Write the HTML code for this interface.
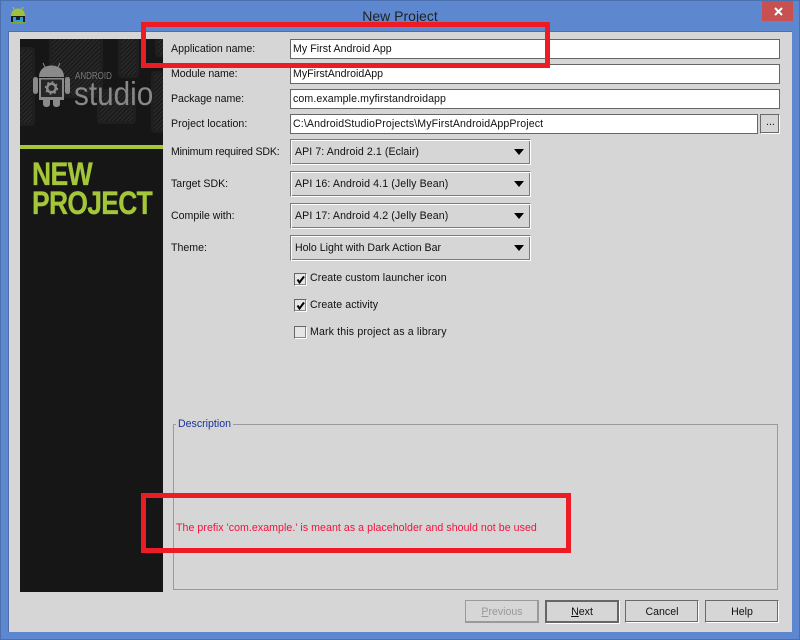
<!DOCTYPE html>
<html><head><meta charset="utf-8">
<style>
html,body{margin:0;padding:0;width:800px;height:640px;overflow:hidden;background:#5d88d0}
*{box-sizing:border-box}
.a{position:absolute}
.t{position:absolute;white-space:nowrap;font:10.6px/14px "Liberation Sans",sans-serif;color:#111}
.f{position:absolute;background:#fff;border:1px solid #666;height:20px}
.c{position:absolute;left:290px;width:241px;height:26px;background:#d6d6d6;border:1px solid;border-color:#7a7a7a #fff #fff #7a7a7a;box-shadow:inset 1px 1px 0 #fff,inset -1px -1px 0 #7a7a7a}
.c i{position:absolute;left:223px;top:9px;width:0;height:0;border:5.5px solid transparent;border-top:6px solid #000;border-bottom:0}
.k{position:absolute;left:294px;width:13px;height:13px;background:#e6e6e6;border:1px solid;border-color:#666 #fff #fff #666;box-shadow:inset -1px -1px 0 #888}
.b{position:absolute;top:600px;width:74px;height:23px;background:#d6d6d6;border:1px solid;border-color:#6a6a6a #fff #fff #6a6a6a;box-shadow:inset -1px -1px 0 #6a6a6a;text-align:center;font:10.6px/22px "Liberation Sans",sans-serif;color:#111}
.r{position:absolute;border:5px solid #ed1c24}
.h{position:absolute;border-radius:4px;border:3px solid #1f1f1f;background:repeating-linear-gradient(135deg,#1a1a1a 0,#1a1a1a 1.5px,#2a2a2a 1.5px,#2a2a2a 3px)}
</style></head>
<body>
<div class="a" style="left:0;top:0;width:800px;height:640px;background:#5d88d0;border:1px solid #4a70b0"></div>
<svg class="a" style="left:10px;top:6px" width="17" height="18" viewBox="0 0 17 18">
<path d="M4 3 3 1M12 3 13 1" stroke="#a8c84c" stroke-width="1"/>
<path d="M1 10C1 5 4 2.500 8 2.500S15 5 15 10Z" fill="#a0c040"/>
<rect x="1" y="10" width="14" height="7" fill="#1a1a1a"/>
<rect x="3" y="11" width="10" height="5" fill="#2aa0dc"/>
<rect x="6" y="11" width="4" height="3" fill="#123"/>
<rect x="1" y="16" width="14" height="1.500" fill="#86a838"/>
</svg>
<div class="t" style="left:300px;top:8px;width:200px;text-align:center;font-size:14px;line-height:16px;color:#222">New Project</div>
<div class="a" style="left:762px;top:1px;width:31px;height:20px;background:#c75050"></div>
<svg class="a" style="left:774px;top:7px" width="9" height="9" viewBox="0 0 9 9"><path d="M1 1 8 8M8 1 1 8" stroke="#fff" stroke-width="2"/></svg>

<div class="a" style="left:8px;top:31px;width:784px;height:601px;background:#d6d6d6;border-top:1px solid #4a70b0;border-left:1px solid #4a70b0"></div>

<div class="a" style="left:20px;top:39px;width:143px;height:553px;background:#161616;overflow:hidden">
  <div class="h" style="left:-6px;top:8px;width:21px;height:79px"></div>
  <div class="h" style="left:29px;top:-6px;width:54px;height:65px"></div>
  <div class="h" style="left:98px;top:-6px;width:21px;height:45px"></div>
  <div class="h" style="left:77px;top:50px;width:39px;height:35px"></div>
  <div class="h" style="left:131px;top:32px;width:22px;height:62px"></div>
  <div class="h" style="left:135px;top:-6px;width:20px;height:24px"></div>
  <svg class="a" style="left:13px;top:23px" width="38" height="46" viewBox="0 0 38 46">
    <path d="M12 5 10 1M25 5 27 1" stroke="#8a8a8a" stroke-width="1"/>
    <path d="M6 15C6 8 11 3.500 18.500 3.500S31 8 31 15Z" fill="#8a8a8a"/>
    <rect x="0" y="15" width="5" height="17" rx="2.400" fill="#8a8a8a"/>
    <rect x="32" y="15" width="5" height="17" rx="2.400" fill="#8a8a8a"/>
    <path d="M6 16H31V38H27V42C27 46 20 46 20 42V38H17V42C17 46 10 46 10 42V38H6Z" fill="#8a8a8a"/>
    <rect x="8" y="17.500" width="21" height="17.500" fill="#262626"/>
    <circle cx="18.500" cy="26" r="4.300" fill="none" stroke="#8a8a8a" stroke-width="2.500"/>
    <circle cx="18.500" cy="26" r="6" fill="none" stroke="#8a8a8a" stroke-width="1.400" stroke-dasharray="2 2.700"/>
  </svg>
  <div class="t" style="left:55px;top:32px;font-size:10px;line-height:12px;color:#777;transform-origin:0 0;transform:scaleX(.8)">ANDROID</div>
  <div class="t" style="left:54px;top:36px;font-size:33px;line-height:38px;color:#888;transform-origin:0 0;transform:scaleX(.9)">studio</div>
  <div class="a" style="left:0;top:106px;width:143px;height:4px;background:#a4c639"></div>
  <div class="t" style="left:12px;top:117px;font:bold 32px/36px 'Liberation Sans',sans-serif;letter-spacing:-.8px;color:#a4c639;-webkit-text-stroke:.3px #a4c639;transform-origin:0 0;transform:scaleX(.83)">NEW</div>
  <div class="t" style="left:12px;top:146px;font:bold 32px/36px 'Liberation Sans',sans-serif;letter-spacing:-.8px;color:#a4c639;-webkit-text-stroke:.3px #a4c639;transform-origin:0 0;transform:scaleX(.825)">PROJECT</div>
</div>

<div class="t" style="left:171px;top:42px">Application name:</div>
<div class="t" style="left:171px;top:67px;letter-spacing:-.05px">Module name:</div>
<div class="t" style="left:171px;top:92px;letter-spacing:-.05px">Package name:</div>
<div class="t" style="left:171px;top:117px;letter-spacing:.06px">Project location:</div>
<div class="t" style="left:171px;top:145px;letter-spacing:-.19px">Minimum required SDK:</div>
<div class="t" style="left:171px;top:177px">Target SDK:</div>
<div class="t" style="left:171px;top:209px">Compile with:</div>
<div class="t" style="left:171px;top:241px">Theme:</div>

<div class="f" style="left:290px;top:39px;width:490px"></div>
<div class="f" style="left:290px;top:64px;width:490px"></div>
<div class="f" style="left:290px;top:89px;width:490px"></div>
<div class="f" style="left:290px;top:114px;width:468px"></div>
<div class="a" style="left:760px;top:114px;width:20px;height:20px;background:#d6d6d6;border:1px solid;border-color:#6a6a6a #fff #fff #6a6a6a;box-shadow:inset -1px -1px 0 #6a6a6a"></div>
<div class="t" style="left:766px;top:115px;color:#111">...</div>
<div class="t" style="left:293px;top:42px;letter-spacing:.05px">My First Android App</div>
<div class="t" style="left:293px;top:67px">MyFirstAndroidApp</div>
<div class="t" style="left:293px;top:92px;letter-spacing:.1px">com.example.myfirstandroidapp</div>
<div class="t" style="left:293px;top:117px;letter-spacing:.12px">C:\AndroidStudioProjects\MyFirstAndroidAppProject</div>

<div class="c" style="top:139px"><i></i></div>
<div class="c" style="top:171px"><i></i></div>
<div class="c" style="top:203px"><i></i></div>
<div class="c" style="top:235px"><i></i></div>
<div class="t" style="left:295px;top:145px;letter-spacing:.08px">API 7: Android 2.1 (Eclair)</div>
<div class="t" style="left:295px;top:177px;letter-spacing:.1px">API 16: Android 4.1 (Jelly Bean)</div>
<div class="t" style="left:295px;top:209px;letter-spacing:.1px">API 17: Android 4.2 (Jelly Bean)</div>
<div class="t" style="left:295px;top:241px">Holo Light with Dark Action Bar</div>

<div class="k" style="top:273px"><svg class="a" style="left:1px;top:1px" width="9" height="9" viewBox="0 0 9 9"><path d="M1.500 4.500 3.500 7.500 8 1.500" fill="none" stroke="#000" stroke-width="2"/></svg></div>
<div class="k" style="top:299px"><svg class="a" style="left:1px;top:1px" width="9" height="9" viewBox="0 0 9 9"><path d="M1.500 4.500 3.500 7.500 8 1.500" fill="none" stroke="#000" stroke-width="2"/></svg></div>
<div class="k" style="top:326px"></div>
<div class="t" style="left:310px;top:271px;letter-spacing:.07px">Create custom launcher icon</div>
<div class="t" style="left:310px;top:298px;letter-spacing:.07px">Create activity</div>
<div class="t" style="left:310px;top:325px;letter-spacing:.14px">Mark this project as a library</div>

<div class="a" style="left:173px;top:424px;width:605px;height:166px;border:1px solid #9a9a9a"></div>
<div class="t" style="left:176px;top:417px;background:#d6d6d6;padding:0 2px;color:#1a3399">Description</div>
<div class="t" style="left:176px;top:521px;color:#f5103c;letter-spacing:.055px">The prefix 'com.example.' is meant as a placeholder and should not be used</div>

<div class="b" style="left:465px;border-color:#9a9a9a;box-shadow:inset -1px -1px 0 #9a9a9a;color:#999"><u>P</u>revious</div>
<div class="b" style="left:545px;border:2px solid #666;box-shadow:1px 1px 0 #fff;line-height:20px"><u>N</u>ext</div>
<div class="b" style="left:625px">Cancel</div>
<div class="b" style="left:705px">Help</div>

<div class="r" style="left:141px;top:22px;width:409px;height:46px"></div>
<div class="r" style="left:141px;top:493px;width:430px;height:60px"></div>
</body></html>
